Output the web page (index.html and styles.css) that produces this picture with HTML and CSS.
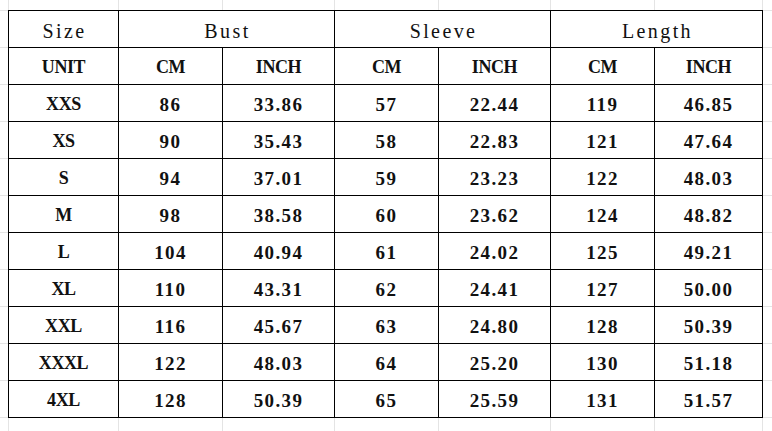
FILE: index.html
```html
<!DOCTYPE html>
<html>
<head>
<meta charset="utf-8">
<link rel="stylesheet" href="styles.css">
</head>
<body>
<div class="sheet">
  <div class="chart">
    <div class="cell head">Size</div>
    <div class="cell head span2">Bust</div>
    <div class="cell head span2">Sleeve</div>
    <div class="cell head span2">Length</div>

    <div class="cell txt">UNIT</div>
    <div class="cell txt">CM</div><div class="cell txt">INCH</div>
    <div class="cell txt">CM</div><div class="cell txt">INCH</div>
    <div class="cell txt">CM</div><div class="cell txt">INCH</div>

    <div class="cell txt">XXS</div><div class="cell num">86</div><div class="cell num">33.86</div><div class="cell num">57</div><div class="cell num">22.44</div><div class="cell num">119</div><div class="cell num">46.85</div>
    <div class="cell txt">XS</div><div class="cell num">90</div><div class="cell num">35.43</div><div class="cell num">58</div><div class="cell num">22.83</div><div class="cell num">121</div><div class="cell num">47.64</div>
    <div class="cell txt">S</div><div class="cell num">94</div><div class="cell num">37.01</div><div class="cell num">59</div><div class="cell num">23.23</div><div class="cell num">122</div><div class="cell num">48.03</div>
    <div class="cell txt">M</div><div class="cell num">98</div><div class="cell num">38.58</div><div class="cell num">60</div><div class="cell num">23.62</div><div class="cell num">124</div><div class="cell num">48.82</div>
    <div class="cell txt">L</div><div class="cell num">104</div><div class="cell num">40.94</div><div class="cell num">61</div><div class="cell num">24.02</div><div class="cell num">125</div><div class="cell num">49.21</div>
    <div class="cell txt">XL</div><div class="cell num">110</div><div class="cell num">43.31</div><div class="cell num">62</div><div class="cell num">24.41</div><div class="cell num">127</div><div class="cell num">50.00</div>
    <div class="cell txt">XXL</div><div class="cell num">116</div><div class="cell num">45.67</div><div class="cell num">63</div><div class="cell num">24.80</div><div class="cell num">128</div><div class="cell num">50.39</div>
    <div class="cell txt">XXXL</div><div class="cell num">122</div><div class="cell num">48.03</div><div class="cell num">64</div><div class="cell num">25.20</div><div class="cell num">130</div><div class="cell num">51.18</div>
    <div class="cell txt">4XL</div><div class="cell num">128</div><div class="cell num">50.39</div><div class="cell num">65</div><div class="cell num">25.59</div><div class="cell num">131</div><div class="cell num">51.57</div>
  </div>
</div>
</body>
</html>
```

FILE: styles.css
```css
html, body {
  margin: 0;
  padding: 0;
}

body {
  width: 772px;
  height: 431px;
  overflow: hidden;
  background-color: #ffffff;
  background-image:
    linear-gradient(to bottom, #e4e4e4 1px, transparent 1px),
    linear-gradient(#e4e4e4, #e4e4e4),
    linear-gradient(#e4e4e4, #e4e4e4),
    linear-gradient(#e4e4e4, #e4e4e4),
    linear-gradient(#e4e4e4, #e4e4e4),
    linear-gradient(#e4e4e4, #e4e4e4),
    linear-gradient(#e4e4e4, #e4e4e4),
    linear-gradient(#e4e4e4, #e4e4e4),
    linear-gradient(#e4e4e4, #e4e4e4);
  background-repeat: repeat-y, no-repeat, no-repeat, no-repeat, no-repeat, no-repeat, no-repeat, no-repeat, no-repeat;
  background-size: 100% 37px, 1px 100%, 1px 100%, 1px 100%, 1px 100%, 1px 100%, 1px 100%, 1px 100%, 1px 100%;
  background-position: 0 10px, 8px 0, 118px 0, 222px 0, 334px 0, 438px 0, 550px 0, 654px 0, 762px 0;
}

.sheet {
  padding: 10px 0 0 8px;
}

.chart {
  display: grid;
  grid-template-columns: 110px 104px 112px 104px 112px 104px 108px;
  grid-auto-rows: 37px;
  width: 754px;
  border-top: 1px solid #000;
  border-left: 1px solid #000;
  background: #fff;
}

.cell {
  box-sizing: border-box;
  border-right: 1px solid #000;
  border-bottom: 1px solid #000;
  display: flex;
  align-items: center;
  justify-content: center;
  padding-top: 3px;
  color: #111;
  white-space: nowrap;
}

.span2 {
  grid-column: span 2;
}

.head {
  font-family: "Liberation Serif", "DejaVu Serif", serif;
  font-size: 20px;
  letter-spacing: 2.4px;
  font-weight: normal;
  padding-top: 5px;
  padding-left: 2px;
}

.txt {
  font-family: "Liberation Serif", "DejaVu Serif", serif;
  font-weight: bold;
  font-size: 18px;
  letter-spacing: -0.4px;
}

.num {
  font-family: "Liberation Serif", "DejaVu Serif", serif;
  font-weight: bold;
  font-size: 19px;
  letter-spacing: 1.4px;
}
```
